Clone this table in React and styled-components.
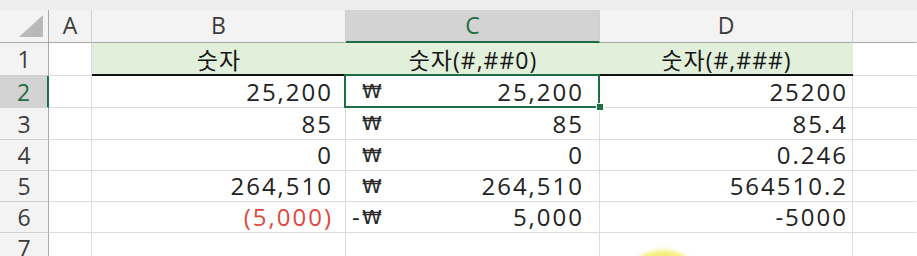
import React from 'react'
import styled, { createGlobalStyle, css } from 'styled-components'

const GREEN = '#1f6e43'

const GlobalStyle = createGlobalStyle`
  html, body {
    margin: 0;
    padding: 0;
    background: #ffffff;
    overflow: hidden;
  }
  body {
    font-family: "Open Sans", "Noto Sans CJK KR", sans-serif;
  }
`

const rows = [
  { n: 1, h: 33, header: true, b: '숫자', c: '숫자(#,##0)', d: '숫자(#,###)' },
  { n: 2, h: 32, b: '25,200', c: '25,200', d: '25200', selected: true },
  { n: 3, h: 32, b: '85', c: '85', d: '85.4' },
  { n: 4, h: 31, b: '0', c: '0', d: '0.246' },
  { n: 5, h: 31, b: '264,510', c: '264,510', d: '564510.2' },
  { n: 6, h: 31, b: '(5,000)', c: '5,000', d: '-5000', negative: true },
  { n: 7, h: 30 },
]

export default function App() {
  return (
    <>
      <GlobalStyle />
      <Page>
        <TopStrip />
        <Sheet>
          <Corner>
            <svg width="24" height="22" viewBox="0 0 24 22">
              <polygon points="24,0 24,22 0,22" fill="#b9b9b9" />
            </svg>
          </Corner>
          <ColHead>A</ColHead>
          <ColHead>B</ColHead>
          <ColHead $active>C</ColHead>
          <ColHead>D</ColHead>
          <ColHead $last />

          {rows.map((r) => (
            <React.Fragment key={r.n}>
              <RowHead $h={r.h} $active={r.selected}>{r.n}</RowHead>
              <Cell $h={r.h} />
              {r.header ? (
                <>
                  <TitleCell $h={r.h}>{r.b}</TitleCell>
                  <TitleCell $h={r.h}>{r.c}</TitleCell>
                  <TitleCell $h={r.h}>{r.d}</TitleCell>
                </>
              ) : (
                <>
                  <Cell $h={r.h} $align="right" $pr={12} $red={r.negative}>{r.b}</Cell>
                  <Cell $h={r.h} $selected={r.selected}>
                    {r.c && (
                      <Accounting>
                        <Sign>{r.negative ? '-' : ''}</Sign>
                        <Won>₩</Won>
                        <Amount>{r.c}</Amount>
                      </Accounting>
                    )}
                    {r.selected && <Handle />}
                  </Cell>
                  <Cell $h={r.h} $align="right" $pr={4}>{r.d}</Cell>
                </>
              )}
              <Cell $h={r.h} $last />
            </React.Fragment>
          ))}
        </Sheet>
        <CursorGlow />
      </Page>
    </>
  )
}

const Page = styled.div`
  position: relative;
  width: 917px;
  height: 256px;
  overflow: hidden;
  background: #ffffff;
`

const TopStrip = styled.div`
  height: 10px;
  background: #ededed;
`

const Sheet = styled.div`
  display: grid;
  grid-template-columns: 49px 43px 254px 254px 253px 1fr;
  font-size: 24px;
  color: #222222;
`

const Corner = styled.div`
  height: 33px;
  box-sizing: border-box;
  background: #f3f3f3;
  border-right: 1px solid #a9a9a9;
  border-bottom: 1px solid #a9a9a9;
  display: flex;
  align-items: flex-end;
  justify-content: flex-end;
  padding: 0 5px 5px 0;
`

const ColHead = styled.div`
  height: 33px;
  box-sizing: border-box;
  background: #f3f3f3;
  border-right: 1px solid ${({ $last }) => ($last ? 'transparent' : '#cfcfcf')};
  border-bottom: 1px solid #a9a9a9;
  display: flex;
  align-items: center;
  justify-content: center;
  color: #3c3c3c;
  font-size: 23px;
  padding-bottom: 2px;
  ${({ $active }) =>
    $active &&
    css`
      background: #d3d3d3;
      color: ${GREEN};
      border-bottom: 2px solid ${GREEN};
      padding-bottom: 1px;
    `}
`

const RowHead = styled.div`
  height: ${({ $h }) => $h}px;
  box-sizing: border-box;
  background: #f3f3f3;
  border-right: 1px solid #a9a9a9;
  border-bottom: 1px solid #d0d0d0;
  display: flex;
  align-items: center;
  justify-content: center;
  color: #3c3c3c;
  font-size: 23px;
  ${({ $active }) =>
    $active &&
    css`
      background: #d3d3d3;
      color: ${GREEN};
      border-right: 2px solid ${GREEN};
    `}
`

const Cell = styled.div`
  position: relative;
  height: ${({ $h }) => $h}px;
  box-sizing: border-box;
  border-right: 1px solid ${({ $last }) => ($last ? 'transparent' : '#dcdcdc')};
  border-bottom: 1px solid #dcdcdc;
  display: flex;
  align-items: center;
  justify-content: ${({ $align }) => ($align === 'right' ? 'flex-end' : 'flex-start')};
  padding: 0 ${({ $pr }) => $pr ?? 6}px 1px 6px;
  white-space: nowrap;
  letter-spacing: 2px;
  color: ${({ $red }) => ($red ? '#e0473d' : '#222222')};
  ${({ $selected }) =>
    $selected &&
    css`
      &::after {
        content: '';
        position: absolute;
        left: -2px;
        top: -2px;
        right: -1px;
        bottom: -1px;
        border: 2px solid ${GREEN};
        pointer-events: none;
      }
    `}
`

const TitleCell = styled.div`
  height: ${({ $h }) => $h}px;
  box-sizing: border-box;
  background: #e2efda;
  border-bottom: 2px solid #111111;
  display: flex;
  align-items: center;
  justify-content: center;
  font-family: "Open Sans", "Noto Sans CJK KR", sans-serif;
  font-size: 23px;
  letter-spacing: 1px;
  color: #151515;
  padding-top: 1px;
`

const Accounting = styled.div`
  flex: 1;
  display: flex;
  align-items: center;
`

const Sign = styled.span`
  width: 10px;
`

const Won = styled.span`
  font-family: "DejaVu Sans", sans-serif;
  font-size: 20px;
  letter-spacing: 0;
  color: #2a2a2a;
`

const Amount = styled.span`
  margin-left: auto;
  padding-right: 9px;
`

const Handle = styled.div`
  position: absolute;
  right: -5px;
  bottom: -4px;
  width: 6px;
  height: 6px;
  background: ${GREEN};
  border: 1px solid #ffffff;
  z-index: 2;
`

const CursorGlow = styled.div`
  position: absolute;
  left: 620px;
  top: 250px;
  width: 86px;
  height: 86px;
  border-radius: 50%;
  background: #f6ef7a;
  filter: blur(2px);
`
